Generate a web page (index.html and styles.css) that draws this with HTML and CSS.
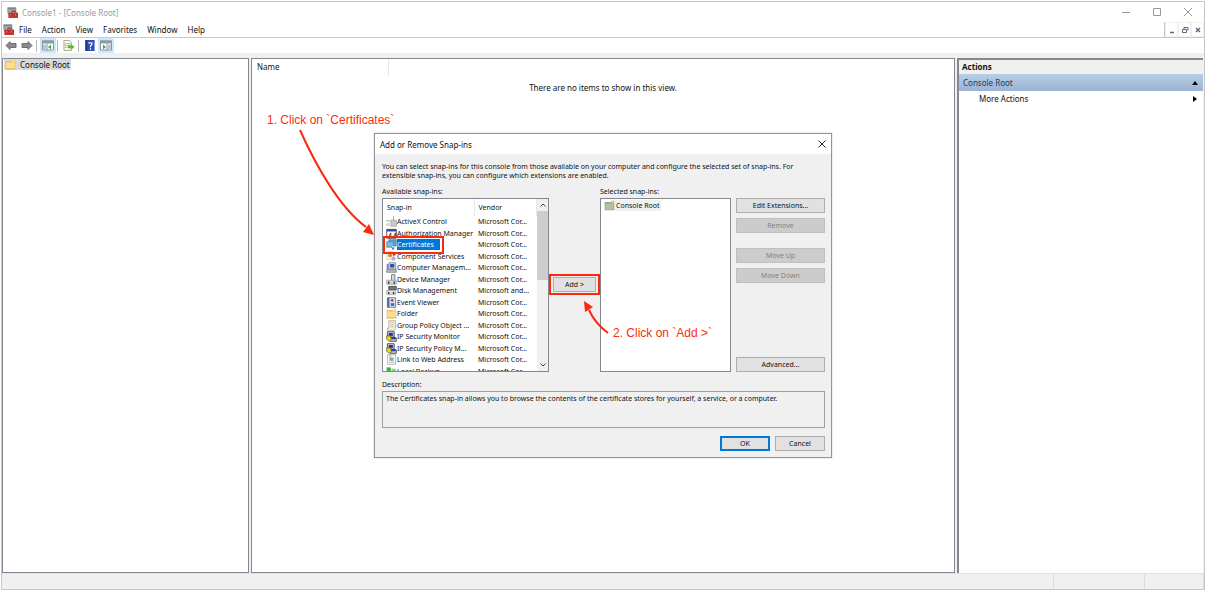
FILE: index.html
```html
<!DOCTYPE html>
<html lang="en">
<head>
    <meta charset="UTF-8">
    <meta name="viewport" content="width=device-width, initial-scale=1.0">
    <title>Console1 - [Console Root]</title>
    <link rel="stylesheet" href="styles.css">
</head>
<body>
    <!-- icons used more than once -->
    <svg class="defs" aria-hidden="true">
        <symbol id="icon-console" viewBox="0 0 16 16">
            <path d="M1 1h12v8H1z" fill="#c9ced3" stroke="#8b9298"/>
            <path d="M1 1h12v3H1z" fill="#7f8890"/>
            <path d="M2 5h3v2H2z" fill="#7d868d"/>
            <path d="M7 8V6h5v2" fill="none" stroke="#8c2a22" stroke-width="1.500"/>
            <path d="M2 8h14v8H2z" fill="#c8352c"/>
            <path d="M2 10h14v1H2z" fill="#a3241d"/>
            <path d="M5 10h1v2H5zM12 10h1v2h-1z" fill="#f3c9c4"/>
        </symbol>
        <symbol id="icon-folder" viewBox="0 0 16 16">
            <path d="M1 3h9l1-2h3l1 2v12H1z" fill="#e9c05a"/>
            <path d="M2 5h12v9H2z" fill="#fbe094"/>
            <path d="M10 2h4v2h-4z" fill="#fff4cc"/>
            <path d="M1 14h14v1H1z" fill="#d9a93e"/>
        </symbol>
        <symbol id="icon-security" viewBox="0 0 16 16">
            <path d="M2 1h10v8H2z" fill="#c8ccd4" stroke="#222"/>
            <path d="M4 3h6v4H4z" fill="#1c2f9c"/>
            <path d="M6 10h9v5H6z" fill="#c8ccd4" stroke="#222"/>
            <path d="M8 9h6v3H8z" fill="#1f36b0"/>
            <path d="M1 7h5l2 5-3 3-4-3z" fill="#eadb32" stroke="#554d00"/>
        </symbol>
    </svg>

    <div class="window">
        <header class="titlebar">
            <svg class="icon"><use href="#icon-console"/></svg>
            <span class="title">Console1 - [Console Root]</span>
            <button class="caption" aria-label="Minimize"><svg viewBox="0 0 10 10"><path d="M1 5.500h8"/></svg></button>
            <button class="caption" aria-label="Maximize"><svg viewBox="0 0 10 10"><path d="M1.500 1.500h7v7h-7z"/></svg></button>
            <button class="caption" aria-label="Close"><svg viewBox="0 0 10 10"><path d="M1 1l8 8M9 1l-8 8"/></svg></button>
        </header>

        <nav class="menubar">
            <svg class="icon"><use href="#icon-console"/></svg>
            <button>File</button>
            <button>Action</button>
            <button>View</button>
            <button>Favorites</button>
            <button>Window</button>
            <button>Help</button>
            <div class="child-controls">
                <button aria-label="Minimize child window"><svg viewBox="0 0 8 8"><path d="M2 6.500h4" stroke-width="1.500"/></svg></button>
                <button aria-label="Restore child window"><svg viewBox="0 0 8 8"><path d="M3 3V1.500h4V4H6M1.500 3.500h4v3h-4z"/></svg></button>
                <button aria-label="Close child window"><svg viewBox="0 0 8 8"><path d="M2 2l4 4M6 2l-4 4" stroke-width="1.500"/></svg></button>
            </div>
        </nav>

        <div class="toolbar">
            <button aria-label="Back"><svg viewBox="0 0 12 10"><path d="M1 5l4-4v2h6v4H5v2z" fill="#8b8b8b" stroke="#6f6f6f"/></svg></button>
            <button aria-label="Forward"><svg viewBox="0 0 12 10"><path d="M11 5L7 1v2H1v4h6v2z" fill="#8b8b8b" stroke="#6f6f6f"/></svg></button>
            <span class="sep"></span>
            <button class="on" aria-label="Show console tree"><svg viewBox="0 0 12 10"><path d="M.5.5h11v9H.5z" fill="#fff" stroke="#8797a5"/><path d="M0 0h12v3H0z" fill="#8d9aa6"/><path d="M1 4h3v5H1z" fill="#bcc7d0"/><path d="M5 3v7" stroke="#8797a5"/><path d="M9 4v5L6 6.500z" fill="#3daf2c"/></svg></button>
            <span class="sep"></span>
            <button aria-label="Export list"><svg viewBox="0 0 12 12"><path d="M.5.5h6l2 2v9h-8z" fill="#fffbe6" stroke="#a3a08f"/><path d="M2 4h1M2 6h1M2 8h1" stroke="#555"/><path d="M4 4h3M4 6h3M4 8h3" stroke="#9c9c9c"/><path d="M5 6h3V4l4 3.500L8 11V9H5z" fill="#4fbf35"/></svg></button>
            <span class="sep"></span>
            <button aria-label="Help"><svg viewBox="0 0 12 12"><path d="M1 0h10v12H1z" fill="#2b50b8"/><path d="M1 0h2v12H1z" fill="#1b3484"/><path d="M5 4V3h3v2L6.500 6.500V8M6.500 9v1.500" fill="none" stroke="#fff" stroke-width="1.300"/></svg></button>
            <button class="on" aria-label="Show action pane"><svg viewBox="0 0 12 10"><path d="M.5.5h11v9H.5z" fill="#fff" stroke="#8797a5"/><path d="M0 0h12v3H0z" fill="#8d9aa6"/><path d="M8 4h3v5H8z" fill="#bcc7d0"/><path d="M7 3v7" stroke="#8797a5"/><path d="M3 4v5l3-2.500z" fill="#3daf2c"/></svg></button>
        </div>

        <main class="panes">
            <section class="pane tree">
                <span class="tree-item"><svg class="icon"><use href="#icon-folder"/></svg>Console Root</span>
            </section>
            <section class="pane results">
                <div class="column-head">Name</div>
                <p class="empty">There are no items to show in this view.</p>
            </section>
            <aside class="pane actions">
                <h2>Actions</h2>
                <button class="group">Console Root<svg viewBox="0 0 6 6"><path d="M0 5l3-4 3 4z"/></svg></button>
                <button class="more">More Actions<svg viewBox="0 0 6 6"><path d="M1 0l4 3-4 3z"/></svg></button>
            </aside>
        </main>

        <footer class="statusbar"><span></span><span></span><span></span></footer>
    </div>

    <div class="overlay">
        <div class="dialog" role="dialog" aria-labelledby="dialog-title">
            <div class="dialog-title">
                <h1 id="dialog-title">Add or Remove Snap-ins</h1>
                <button aria-label="Close dialog"><svg viewBox="0 0 8 8"><path d="M.5.5l7 7M7.500.5l-7 7"/></svg></button>
            </div>
            <div class="dialog-body">
                <p class="intro">You can select snap-ins for this console from those available on your computer and configure the selected set of snap-ins. For extensible snap-ins, you can configure which extensions are enabled.</p>

                <div class="picker">
                    <div class="available">
                        <div class="label">Available snap-ins:</div>
                        <div class="listbox">
                            <div class="rows">
                                <table>
                                    <thead>
                                        <tr><th>Snap-in</th><th>Vendor</th></tr>
                                    </thead>
                                    <tbody>
                                        <tr><td><svg class="icon" viewBox="0 0 16 16"><path d="M7 6h8v9H7z" fill="#c9c9c9" stroke="#a2a2a2"/><path d="M11 0v6M0 7h6M0 13h6" stroke="#888"/><path d="M1 10h6v4H1z" fill="#ddd"/></svg><span>ActiveX Control</span></td><td>Microsoft Cor...</td></tr>
                                        <tr><td><svg class="icon" viewBox="0 0 16 16"><path d="M1 2h14v13H1z" fill="#fff" stroke="#222"/><path d="M1 2h14v3H1z" fill="#2a3fae"/><path d="M3 14l4-7v7zM10 14l4-7v7z" fill="#e5cf24" stroke="#222"/></svg><span>Authorization Manager</span></td><td>Microsoft Cor...</td></tr>
                                        <tr><td class="marked"><svg class="icon" viewBox="0 0 16 16"><path d="M4 1h11v9H4z" fill="#5f9fd0" stroke="#3f83b8"/><path d="M1 4h10v8H1z" fill="#84b9df" stroke="#3f83b8"/><circle cx="10" cy="11" r="2" fill="#d8eefa" stroke="#3f83b8"/><path d="M9 13v3l2-1 1 1v-3" fill="#3f83b8"/></svg><span class="selected">Certificates</span></td><td>Microsoft Cor...</td></tr>
                                        <tr><td><svg class="icon" viewBox="0 0 16 16"><path d="M1 1h10v12H1z" fill="#f3efe4" stroke="#d5d0c2"/><circle cx="6" cy="6" r="3" fill="#d98a25"/><circle cx="12" cy="5" r="2" fill="#cf3a2c"/><circle cx="11" cy="11" r="3" fill="#a9b2d9"/></svg><span>Component Services</span></td><td>Microsoft Cor...</td></tr>
                                        <tr><td><svg class="icon" viewBox="0 0 16 16"><path d="M4 1h10v9H4z" fill="#d5d9df" stroke="#777"/><path d="M6 3h6v5H6z" fill="#2947b5"/><path d="M1 11h14v4H1z" fill="#b4b8bd" stroke="#777"/><path d="M1 3h3v8H1z" fill="#7689c2"/></svg><span>Computer Managem...</span></td><td>Microsoft Cor...</td></tr>
                                        <tr><td><svg class="icon" viewBox="0 0 16 16"><path d="M8 1h5v9H8z" fill="#d8d8d8" stroke="#555"/><path d="M1 9h14v6H1z" fill="#d6d6d6" stroke="#999"/><path d="M3 11h2v3H3zM11 11h2v3h-2z" fill="#333"/></svg><span>Device Manager</span></td><td>Microsoft Cor...</td></tr>
                                        <tr><td><svg class="icon" viewBox="0 0 16 16"><path d="M4 2h11v5H4z" fill="#777" stroke="#333"/><path d="M1 8h13v6H1z" fill="#e2e2e2" stroke="#999"/><path d="M3 10h2v3H3zM10 10h2v3h-2z" fill="#333"/></svg><span>Disk Management</span></td><td>Microsoft and...</td></tr>
                                        <tr><td><svg class="icon" viewBox="0 0 16 16"><path d="M2 1h12v14H2z" fill="#d7e4f4" stroke="#44546a"/><path d="M2 1h3v14H2z" fill="#56698a"/><circle cx="9" cy="5" r="2" fill="#d33b2f"/><path d="M7 9h5v4H7z" fill="#3c68c4"/></svg><span>Event Viewer</span></td><td>Microsoft Cor...</td></tr>
                                        <tr><td><svg class="icon"><use href="#icon-folder"/></svg><span>Folder</span></td><td>Microsoft Cor...</td></tr>
                                        <tr><td><svg class="icon" viewBox="0 0 16 16"><path d="M4 1h10v11l-2 3H2v-3h2z" fill="#f6f1de" stroke="#a39d88"/><path d="M6 4h6M6 7h6M6 10h6" stroke="#b5ae98"/></svg><span>Group Policy Object ...</span></td><td>Microsoft Cor...</td></tr>
                                        <tr><td><svg class="icon"><use href="#icon-security"/></svg><span>IP Security Monitor</span></td><td>Microsoft Cor...</td></tr>
                                        <tr><td><svg class="icon"><use href="#icon-security"/></svg><span>IP Security Policy M...</span></td><td>Microsoft Cor...</td></tr>
                                        <tr><td><svg class="icon" viewBox="0 0 16 16"><path d="M2 1h12v14H2z" fill="#fafafa" stroke="#9a9a9a"/><path d="M5 5h6v5H5z" fill="#7fb0a5"/><path d="M4 12h8M4 3h4" stroke="#999"/></svg><span>Link to Web Address</span></td><td>Microsoft Cor...</td></tr>
                                        <tr><td><svg class="icon" viewBox="0 0 16 16"><path d="M1 2h6v6H1z" fill="#3fae3c"/><path d="M8 4h6v8H8z" fill="#8fca7f"/></svg><span>Local Backup</span></td><td>Microsoft Cor...</td></tr>
                                    </tbody>
                                </table>
                            </div>
                            <div class="scrollbar">
                                <button aria-label="Scroll up"><svg viewBox="0 0 6 6"><path d="M.5 4.500L3 2l2.500 2.500"/></svg></button>
                                <div class="thumb"></div>
                                <button aria-label="Scroll down"><svg viewBox="0 0 6 6"><path d="M.5 1.500L3 4l2.500-2.500"/></svg></button>
                            </div>
                        </div>
                    </div>

                    <div class="add-frame"><button class="btn">Add &gt;</button></div>

                    <div class="chosen">
                        <div class="label">Selected snap-ins:</div>
                        <div class="listbox">
                            <svg class="icon" viewBox="0 0 16 16"><path d="M1 3h9l1-2h4v14H1z" fill="#93a284"/><path d="M2 5h12v9H2z" fill="#b3c0a2"/><path d="M11 2h3v2h-3z" fill="#e8eedd"/></svg><span class="chosen-item">Console Root</span>
                        </div>
                    </div>

                    <div class="side-buttons">
                        <button class="btn">Edit Extensions...</button>
                        <button class="btn" disabled>Remove</button>
                        <button class="btn spaced" disabled>Move Up</button>
                        <button class="btn" disabled>Move Down</button>
                        <button class="btn last">Advanced...</button>
                    </div>
                </div>

                <div class="label">Description:</div>
                <div class="description">The Certificates snap-in allows you to browse the contents of the certificate stores for yourself, a service, or a computer.</div>

                <div class="dialog-buttons">
                    <button class="btn default">OK</button>
                    <button class="btn">Cancel</button>
                </div>
            </div>

            <!-- tutorial notes drawn over the screen -->
            <div class="note note-one">1. Click on `Certificates`</div>
            <svg class="arrow arrow-one" viewBox="0 0 78 110"><path d="M2 2C18 38 42 80 68 99" fill="none" stroke="#fb2a0c" stroke-width="2"/><path d="M76 107l-11-3 6-8z" fill="#fb2a0c"/></svg>
            <svg class="arrow arrow-two" viewBox="0 0 28 34"><path d="M26 32C18 26 11 18 7 9" fill="none" stroke="#fb2a0c" stroke-width="2"/><path d="M2 0l9 6-8 5z" fill="#fb2a0c"/></svg>
            <div class="note note-two">2. Click on `Add &gt;`</div>
        </div>
    </div>
</body>
</html>
```

FILE: styles.css
```css
* {
    box-sizing: border-box;
}
body {
    margin: 0;
    height: 100vh;
    padding: 1px;
    background: #fff;
    font-family: 'Noto Sans', sans-serif;
    font-size: 8px;
    line-height: 11px;
    color: #111;
    overflow: hidden;
}
button {
    font: inherit;
    color: inherit;
    background: none;
    border: none;
    padding: 0;
}
h1, h2, p {
    margin: 0;
    font-size: 8px;
    font-weight: normal;
}
svg {
    display: block;
    flex: none;
}
.defs {
    position: absolute;
    width: 0;
    height: 0;
}
.icon {
    width: 11px;
    height: 11px;
}

/* main window */
.window {
    height: 100%;
    display: flex;
    flex-direction: column;
    background: #f0f0f0;
    border: 1px solid #c6c6c6;
}
.titlebar {
    display: flex;
    align-items: center;
    height: 20px;
    padding: 0 1px 0 5px;
    background: #fff;
    color: #999;
}
.title {
    flex: 1;
    padding-left: 4px;
}
.caption {
    width: 31px;
    height: 20px;
    display: flex;
    align-items: center;
    justify-content: center;
}
.caption svg {
    width: 10px;
    height: 10px;
    fill: none;
    stroke: #999;
}
.menubar {
    display: flex;
    align-items: center;
    gap: 10px;
    height: 16px;
    padding-left: 1px;
    background: #fff;
    border-bottom: 1px solid #c9c9c9;
}
.menubar .icon {
    margin-right: -5px;
}
.child-controls {
    display: flex;
    margin-left: auto;
    border-left: 1px solid #c9c9c9;
}
.child-controls button {
    width: 13px;
    height: 15px;
    display: flex;
    align-items: center;
    justify-content: center;
    border: 1px solid #f0f0f0;
}
.child-controls svg {
    width: 8px;
    height: 8px;
    fill: none;
    stroke: #5d6b7c;
}
.toolbar {
    display: flex;
    align-items: center;
    height: 15px;
    padding-left: 1px;
    background: #fff;
}
.toolbar button {
    width: 16px;
    height: 15px;
    display: flex;
    align-items: center;
    justify-content: center;
}
.toolbar button.on {
    background: #cce8ff;
}
.toolbar svg {
    width: 12px;
    height: 11px;
}
.sep {
    width: 1px;
    height: 12px;
    margin: 0 3px 0 1px;
    background: #b9b9b9;
}
.panes {
    flex: 1;
    display: grid;
    grid-template-columns: 247px 1fr 246px;
    gap: 2px;
    padding: 5px 1px 0 0;
}
.pane {
    background: #fff;
    border: 1px solid #828790;
}
.tree {
    padding: 0 1px;
}
.tree-item {
    display: inline-flex;
    gap: 4px;
    padding: 0 1px;
    background: #d9d9d9;
}
.column-head {
    width: 137px;
    height: 17px;
    line-height: 16px;
    padding-left: 5px;
    border-right: 1px solid #e5e5e5;
}
.empty {
    padding-top: 6px;
    text-align: center;
}
.actions {
    border-width: 2px 0 0 2px;
}
.actions h2 {
    height: 14px;
    line-height: 14px;
    padding-left: 3px;
    font-weight: bold;
    background: #f0f0f0;
}
.actions button {
    display: flex;
    align-items: center;
    justify-content: space-between;
    width: 100%;
    height: 15px;
    padding: 0 5px 0 4px;
}
.actions .group {
    height: 17px;
    color: #1e395b;
    background: linear-gradient(#b9cde5, #9ab4d2);
}
.actions .more {
    padding-left: 20px;
}
.actions svg {
    width: 6px;
    height: 6px;
    fill: #000;
}
.statusbar {
    display: grid;
    grid-template-columns: 1fr 91px 59px;
    height: 16px;
    border-top: 1px solid #e2e2e2;
}
.statusbar span {
    border-right: 1px solid #dcdcdc;
}

/* snap-in dialog */
.overlay {
    position: absolute;
    inset: 0;
    display: grid;
    place-items: center;
}
.dialog {
    position: relative;
    width: 458px;
    background: #f0f0f0;
    border: 1px solid #959595;
    box-shadow: 0 0 1px #999;
    font-size: 7px;
}
.dialog-title {
    display: flex;
    align-items: center;
    justify-content: space-between;
    height: 20px;
    padding: 0 5px;
    background: #fff;
}
.dialog-title svg {
    width: 8px;
    height: 8px;
    fill: none;
    stroke: #222;
}
.dialog-body {
    padding: 8px 6px 6px 7px;
}
.intro {
    font-size: 7px;
    line-height: 9px;
    padding-right: 20px;
}
.label {
    height: 12px;
    line-height: 12px;
}
.picker {
    display: flex;
    padding-top: 6px;
}
.available {
    flex: 1;
}
.listbox {
    display: flex;
    height: 174px;
    background: #fff;
    border: 1px solid #828790;
}
.rows {
    flex: 1;
    overflow: hidden;
}
.rows table {
    width: 100%;
    height: 178px;
    border-collapse: collapse;
    table-layout: fixed;
    white-space: nowrap;
}
.rows th {
    height: 17px;
    padding: 0 0 0 4px;
    text-align: left;
    font-weight: normal;
    border-right: 1px solid #e8e8e8;
}
.rows th:first-child {
    width: 91px;
}
.rows td {
    padding: 0 0 0 3px;
}
.rows td:last-child {
    padding-left: 4px;
}
.rows td .icon {
    float: left;
}
.rows td span {
    display: block;
    margin-left: 11px;
}
.rows td .selected {
    width: 43px;
    background: #0078d7;
    color: #fff;
}
.marked {
    position: relative;
}
.marked::after {
    content: '';
    position: absolute;
    inset: -3px 30px -3px 0;
    border: 2px solid #fb2a0c;
}
.scrollbar {
    width: 11px;
    display: flex;
    flex-direction: column;
    background: #f0f0f0;
}
.scrollbar button {
    height: 12px;
    display: flex;
    align-items: center;
    justify-content: center;
}
.scrollbar button:last-child {
    margin-top: auto;
}
.scrollbar svg {
    width: 6px;
    height: 6px;
    fill: none;
    stroke: #444;
}
.thumb {
    height: 69px;
    background: #cdcdcd;
}
.btn {
    height: 15px;
    line-height: 13px;
    background: #e1e1e1;
    border: 1px solid #adadad;
}
.btn:disabled {
    background: #ccc;
    border-color: #bfbfbf;
    color: #838383;
}
.btn.default {
    border: 2px solid #0078d7;
    line-height: 11px;
}
.add-frame {
    display: flex;
    width: 51px;
    height: 21px;
    margin-top: 88px;
    padding: 1px 2px;
    border: 2px solid #fb2a0c;
}
.add-frame .btn {
    flex: 1;
}
.chosen {
    width: 131px;
}
.chosen .listbox {
    padding: 1px 3px;
}
.chosen-item {
    height: 11px;
    padding: 0 1px;
    background: #f0f0f0;
}
.side-buttons {
    display: flex;
    flex-direction: column;
    gap: 5px;
    width: 89px;
    margin-left: 5px;
    padding-top: 12px;
}
.side-buttons .spaced {
    margin-top: 10px;
}
.side-buttons .last {
    margin-top: auto;
}
.picker + .label {
    margin-top: 7px;
}
.description {
    height: 37px;
    padding: 1px 3px;
    border: 1px solid #a0a0a0;
}
.dialog-buttons {
    display: flex;
    justify-content: flex-end;
    gap: 5px;
    padding-top: 8px;
}
.dialog-buttons .btn {
    width: 50px;
}

/* notes */
.note {
    position: absolute;
    font-family: 'Liberation Sans', sans-serif;
    font-size: 12px;
    line-height: 14px;
    color: #fb2a0c;
    white-space: nowrap;
}
.note-one {
    left: -108px;
    top: -21px;
}
.note-two {
    left: 238px;
    top: 192px;
}
.arrow {
    position: absolute;
}
.arrow-one {
    left: -77px;
    top: -6px;
    width: 78px;
    height: 110px;
}
.arrow-two {
    left: 207px;
    top: 167px;
    width: 28px;
    height: 34px;
}
```
